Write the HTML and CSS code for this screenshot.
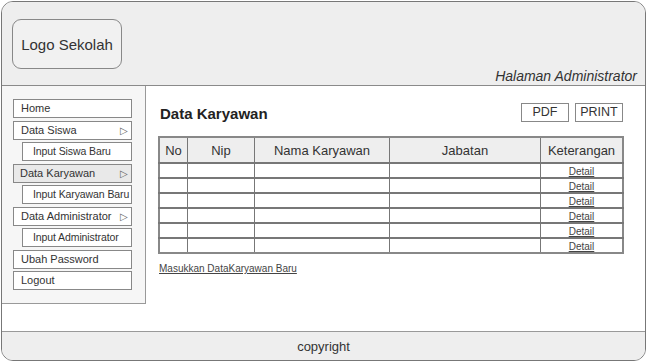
FILE: index.html
```html
<!DOCTYPE html>
<html>
<head>
<meta charset="utf-8">
<link rel="stylesheet" href="styles.css">
</head>
<body>
<div class="frame">
  <header class="header">
    <div class="logo">Logo Sekolah</div>
    <div class="role">Halaman Administrator</div>
  </header>
  <div class="body">
    <nav class="sidebar">
      <div class="item">Home</div>
      <div class="item arrow">Data Siswa<span class="tri">&#9655;</span></div>
      <div class="item sub">Input Siswa Baru</div>
      <div class="item arrow active">Data Karyawan<span class="tri">&#9655;</span></div>
      <div class="item sub">Input Karyawan Baru</div>
      <div class="item arrow">Data Administrator<span class="tri">&#9655;</span></div>
      <div class="item sub">Input Administrator</div>
      <div class="item">Ubah Password</div>
      <div class="item">Logout</div>
    </nav>
    <main class="main">
      <div class="top">
        <h1 class="title">Data Karyawan</h1>
        <div class="btns">
          <span class="btn">PDF</span>
          <span class="btn">PRINT</span>
        </div>
      </div>
      <table class="grid">
        <thead>
          <tr><th class="c1">No</th><th class="c2">Nip</th><th class="c3">Nama Karyawan</th><th class="c4">Jabatan</th><th class="c5">Keterangan</th></tr>
        </thead>
        <tbody>
          <tr><td></td><td></td><td></td><td></td><td><a class="lnk">Detail</a></td></tr>
          <tr><td></td><td></td><td></td><td></td><td><a class="lnk">Detail</a></td></tr>
          <tr><td></td><td></td><td></td><td></td><td><a class="lnk">Detail</a></td></tr>
          <tr><td></td><td></td><td></td><td></td><td><a class="lnk">Detail</a></td></tr>
          <tr><td></td><td></td><td></td><td></td><td><a class="lnk">Detail</a></td></tr>
          <tr><td></td><td></td><td></td><td></td><td><a class="lnk">Detail</a></td></tr>
        </tbody>
      </table>
      <a class="lnk add">Masukkan DataKaryawan Baru</a>
    </main>
  </div>
  <footer class="footer">copyright</footer>
</div>
</body>
</html>
```
FILE: styles.css
```css
html, body { margin: 0; padding: 0; background: #ffffff; }
body { font-family: "Liberation Sans", Arial, sans-serif; color: #333; }
.frame {
  margin: 1px;
  width: 645px;
  height: 360px;
  box-sizing: border-box;
  border: 1px solid #777;
  border-radius: 12px;
  overflow: hidden;
  display: flex;
  flex-direction: column;
  background: #fff;
}
.header {
  height: 84px;
  box-sizing: border-box;
  background: #eeeeee;
  border-bottom: 1px solid #8a8a8a;
  display: flex;
  justify-content: space-between;
  align-items: flex-start;
  padding: 17px 8px 0 10px;
}
.logo {
  width: 108px;
  height: 48px;
  border: 1px solid #888;
  border-radius: 9px;
  display: flex;
  align-items: center;
  justify-content: center;
  font-size: 15px;
  color: #333;
  background: #f1f1f1;
}
.role {
  align-self: flex-end;
  font-style: italic;
  font-size: 14px;
  color: #333;
  margin-bottom: 1px;
}
.body { flex: 1; display: flex; align-items: flex-start; }
.sidebar {
  width: 144px;
  height: 218px;
  box-sizing: border-box;
  background: #f6f6f6;
  border-right: 1px solid #999;
  border-bottom: 1px solid #999;
  padding: 13px 13px 0 11px;
  display: flex;
  flex-direction: column;
  gap: 2.5px;
}
.item {
  height: 17px;
  flex: none;
  border: 1px solid #888;
  background: #fff;
  font-size: 11px;
  line-height: 17px;
  padding-left: 7px;
  display: flex;
  justify-content: space-between;
  color: #333;
  white-space: nowrap;
}
.item.sub { margin-left: 9px; padding-left: 10px; font-size: 10.5px; letter-spacing: -0.1px; }
.item.active { background: #e9e9e9; padding-left: 6px; }
.tri { font-size: 10px; color: #666; padding-right: 3px; }
.main { flex: 1; padding: 15px 21px 0 12px; }
.top { display: flex; justify-content: space-between; align-items: flex-start; padding-left: 2px; }
.title { margin: 4px 0 0; font-size: 15px; font-weight: bold; color: #222; }
.btns { display: flex; gap: 5px; margin-top: 2px; margin-right: 1px; }
.btn {
  width: 46px;
  height: 17px;
  border: 1px solid #888;
  font-size: 12.5px;
  line-height: 17px;
  text-align: center;
  color: #333;
}
.btn:first-child { margin-right: 1px; }
.grid {
  margin-top: 14px;
  width: 466px;
  border-collapse: collapse;
  border: 2px solid #888;
}
.grid th {
  background: #eeeeee;
  height: 24px;
  font-weight: normal;
  font-size: 13px;
  border: 1px solid #777;
  border-bottom-width: 2px;
  color: #333;
  padding: 0;
  vertical-align: middle;
}
.grid td {
  height: 12px;
  border: 1px solid #777;
  border-top-width: 2px;
  padding: 0;
  text-align: center;
  line-height: 11px;
}
.grid tbody tr:first-child td { border-top-width: 1px; }
.c1 { width: 27px; }
.c2 { width: 66px; }
.c3 { width: 134px; }
.c4 { width: 150px; }
.lnk { font-size: 10px; color: #444; text-decoration: underline; }
.add { display: block; margin-top: 9px; padding-left: 1px; }
.footer {
  height: 29px;
  box-sizing: border-box;
  border-top: 1px solid #999;
  background: #eeeeee;
  display: flex;
  align-items: center;
  justify-content: center;
  font-size: 13px;
  color: #333;
}
```
